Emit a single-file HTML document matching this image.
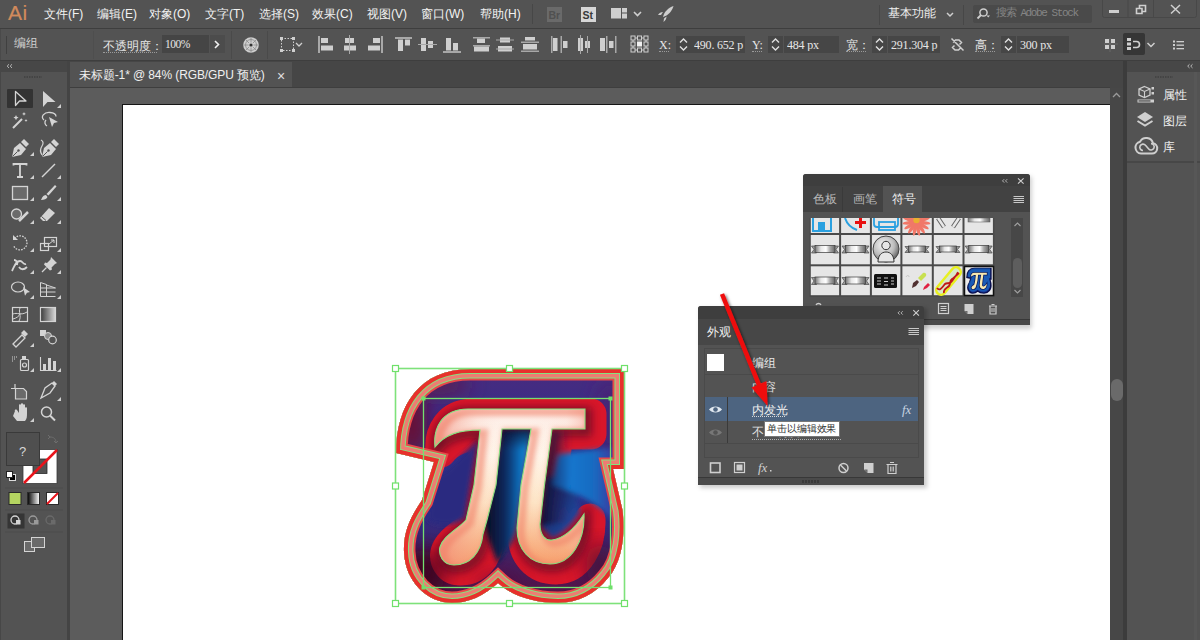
<!DOCTYPE html><html><head><meta charset="utf-8"><style>
*{margin:0;padding:0;box-sizing:border-box}
html,body{width:1200px;height:640px;overflow:hidden;background:#535353;font-family:"Liberation Sans",sans-serif;color:#e8e8e8}
.a{position:absolute}
.t{white-space:nowrap;line-height:1}
.m{position:absolute;top:7px;font-size:12px;color:#f2f2f2;white-space:nowrap;line-height:14px}
.sf{font-family:"Liberation Serif",serif}
</style></head><body>
<div class="a" style="left:0px;top:0px;width:1200px;height:28px;background:#535353"></div>
<div class="a t" style="left:8px;top:2px;font-size:21px;color:#d08a5c;line-height:22px;letter-spacing:0.5px;-webkit-text-stroke:0.2px #d08a5c">Ai</div>
<div class="m" style="left:44px">文件(F)</div>
<div class="m" style="left:97px">编辑(E)</div>
<div class="m" style="left:149px">对象(O)</div>
<div class="m" style="left:205px">文字(T)</div>
<div class="m" style="left:259px">选择(S)</div>
<div class="m" style="left:312px">效果(C)</div>
<div class="m" style="left:367px">视图(V)</div>
<div class="m" style="left:421px">窗口(W)</div>
<div class="m" style="left:480px">帮助(H)</div>
<div class="a" style="left:532px;top:4px;width:1px;height:20px;background:#474747"></div>
<div class="a" style="left:547px;top:7px;width:15px;height:15px;background:#6a6a6a"></div>
<div class="a t" style="left:548.5px;top:8.5px;font-size:10.5px;font-weight:bold;color:#505050;line-height:12px">Br</div>
<div class="a" style="left:581px;top:7px;width:15px;height:15px;background:#d6d6d6"></div>
<div class="a t" style="left:582.5px;top:8.5px;font-size:10.5px;font-weight:bold;color:#3a3a3a;line-height:12px">St</div>
<svg class="a" style="left:0;top:0" width="1200" height="28"><rect x="611" y="8" width="10" height="10.5" fill="#cfcfcf"/><rect x="622" y="8" width="5" height="4.5" fill="#cfcfcf"/><rect x="622" y="13.5" width="5" height="5" fill="#cfcfcf"/><path d="M634 12l3.5 3.5 3.5-3.5" stroke="#cfcfcf" stroke-width="1.6" fill="none"/><path d="M663 17 C664 12 668 8 673.5 6 C672 11.5 668 15.5 663 17Z" fill="#cfcfcf"/><path d="M658 15c1-2 3-3 5-3l-2 3z M664 18.5l2.5-2c0 2-1 4-3 5.5z" fill="#cfcfcf"/><path d="M1102.5 0v15.5a2 2 0 0 0 2 2h90a2 2 0 0 0 2-2V0" stroke="#484848" fill="none"/><rect x="1127.5" y="0" width="1" height="17" fill="#484848"/><rect x="1153" y="0" width="1" height="17" fill="#484848"/><rect x="1109" y="10" width="10" height="3" fill="#cfcfcf"/><path d="M1136.5 8.5h5.5v5h-5.5zM1139.5 8.5v-3h6v6h-3.5" stroke="#cfcfcf" stroke-width="1.6" fill="none"/><path d="M1171 5l9 8.5M1180 5l-9 8.5" stroke="#cfcfcf" stroke-width="1.5"/><rect x="973" y="5" width="119" height="18" rx="2" fill="#4a4a4a"/><circle cx="983.5" cy="12.5" r="3.6" stroke="#cfcfcf" stroke-width="1.5" fill="none"/><path d="M981 15l-3.5 3.5" stroke="#cfcfcf" stroke-width="1.8"/><path d="M986.5 15.5h3.5l-1.75 2z" fill="#cfcfcf"/><path d="M947 13l3 3 3-3" stroke="#cfcfcf" stroke-width="1.5" fill="none"/></svg>
<div class="a" style="left:879px;top:5px;width:1px;height:20px;background:#474747"></div>
<div class="a" style="left:963px;top:5px;width:1px;height:20px;background:#474747"></div>
<div class="a t" style="left:888px;top:7px;font-size:12px;color:#f0f0f0">基本功能</div>
<div class="a t" style="left:996px;top:8px;font-size:11px;color:#858585;font-family:'Liberation Mono',monospace;letter-spacing:-1.4px">搜索 Adobe Stock</div>
<div class="a" style="left:0px;top:28px;width:1200px;height:1px;background:#3e3e3e"></div>
<div class="a" style="left:0px;top:29px;width:1200px;height:32px;background:#535353"></div>
<div class="a" style="left:6px;top:36px;width:1px;height:18px;background:#404040"></div>
<div class="a" style="left:93px;top:31px;width:1px;height:28px;background:#4e4e4e"></div>
<div class="a" style="left:0px;top:29px;width:1px;height:32px;background:#4a4a4a"></div>
<div class="a t" style="left:14px;top:37px;font-size:12px;color:#d0d0d0;font-family:'Liberation Serif',serif">编组</div>
<div class="a t" style="left:103px;top:40px;font-size:12px;color:#e6e6e6;font-family:'Liberation Serif',serif">不透明度：</div>
<div class="a" style="left:103px;top:52px;width:54px;height:1px;border-top:1px dotted #9a9a9a"></div>
<div class="a" style="left:162px;top:35px;width:47px;height:18px;background:#454545"></div>
<div class="a t" style="left:165px;top:39px;font-size:11.5px;color:#e6e6e6;font-family:'Liberation Serif',serif;letter-spacing:-0.5px">100%</div>
<div class="a" style="left:210px;top:35px;width:15px;height:18px;background:#4c4c4c"></div>
<div class="a" style="left:231px;top:31px;width:1px;height:28px;background:#4a4a4a"></div>
<div class="a" style="left:267px;top:31px;width:1px;height:28px;background:#4a4a4a"></div>
<svg class="a" style="left:0;top:0" width="1200" height="64"><path d="M215 41l3.5 3.5-3.5 3.5" stroke="#f0f0f0" stroke-width="1.6" fill="none"/><circle cx="251" cy="45" r="7.8" fill="#cfcfcf"/><circle cx="251" cy="45" r="5.5" fill="none" stroke="#8a8a8a" stroke-width="0.8"/><circle cx="251" cy="45" r="1.6" fill="#333"/><path d="M251 37.5v5M251 47.5v5M243.5 45h5M253.5 45h5M245.7 39.7l3.5 3.5M252.8 46.8l3.5 3.5M256.3 39.7l-3.5 3.5M249.2 46.8l-3.5 3.5" stroke="#8a8a8a" stroke-width="0.8"/><rect x="281.5" y="38.5" width="12" height="12" fill="none" stroke="#cfcfcf" stroke-width="1" stroke-dasharray="1.5 1.5"/><rect x="280.0" y="37.0" width="3" height="3" fill="#cfcfcf"/><rect x="292.0" y="37.0" width="3" height="3" fill="#cfcfcf"/><rect x="280.0" y="49.0" width="3" height="3" fill="#cfcfcf"/><rect x="292.0" y="49.0" width="3" height="3" fill="#cfcfcf"/><path d="M296 43l3 3 3-3" stroke="#cfcfcf" stroke-width="1.3" fill="none"/><rect x="318" y="36" width="2" height="17" fill="#a8a8a8"/><rect x="321" y="38" width="7" height="5" fill="#cfcfcf"/><rect x="321" y="45.5" width="12" height="5" fill="#cfcfcf"/><rect x="345" y="38" width="9" height="5" fill="#cfcfcf"/><rect x="344" y="45.5" width="12" height="5" fill="#cfcfcf"/><rect x="349" y="35" width="1" height="19" fill="#a8a8a8"/><rect x="381" y="36" width="2" height="17" fill="#a8a8a8"/><rect x="373" y="38" width="7" height="5" fill="#cfcfcf"/><rect x="368" y="45.5" width="12" height="5" fill="#cfcfcf"/><rect x="395" y="37" width="17" height="2" fill="#a8a8a8"/><rect x="398" y="39.5" width="5" height="11.5" fill="#cfcfcf"/><rect x="405" y="39.5" width="5" height="6" fill="#cfcfcf"/><rect x="421" y="38" width="5" height="13" fill="#cfcfcf"/><rect x="428" y="41" width="5" height="7" fill="#cfcfcf"/><rect x="418" y="44" width="19" height="1" fill="#a8a8a8"/><rect x="443" y="51" width="18" height="2" fill="#a8a8a8"/><rect x="446" y="38" width="5" height="12.5" fill="#cfcfcf"/><rect x="453" y="43" width="5" height="7.5" fill="#cfcfcf"/><rect x="473" y="37" width="17" height="1.5" fill="#a8a8a8"/><rect x="477" y="38.5" width="8" height="4.5" fill="#cfcfcf"/><rect x="473" y="45" width="17" height="1.5" fill="#a8a8a8"/><rect x="474" y="46.5" width="15" height="5" fill="#cfcfcf"/><rect x="500" y="37.5" width="10" height="5" fill="#cfcfcf"/><rect x="496" y="39.5" width="18" height="1" fill="#a8a8a8"/><rect x="498" y="46" width="14" height="5.5" fill="#cfcfcf"/><rect x="496" y="48.5" width="18" height="1" fill="#a8a8a8"/><rect x="525" y="37" width="10" height="3.5" fill="#cfcfcf"/><rect x="521" y="41.5" width="18" height="1.5" fill="#a8a8a8"/><rect x="523" y="44" width="14" height="5.5" fill="#cfcfcf"/><rect x="521" y="50.5" width="18" height="1.5" fill="#a8a8a8"/><rect x="551" y="36" width="1.5" height="17" fill="#a8a8a8"/><rect x="553" y="38" width="4.5" height="13" fill="#cfcfcf"/><rect x="560.5" y="36" width="1.5" height="17" fill="#a8a8a8"/><rect x="563" y="41" width="4.5" height="7" fill="#cfcfcf"/><rect x="578" y="38" width="5" height="13" fill="#cfcfcf"/><rect x="580" y="35" width="1" height="19" fill="#a8a8a8"/><rect x="585" y="41" width="5" height="7" fill="#cfcfcf"/><rect x="587" y="36" width="1" height="17" fill="#a8a8a8"/><rect x="600" y="38" width="5" height="13" fill="#cfcfcf"/><rect x="606" y="36" width="1.5" height="17" fill="#a8a8a8"/><rect x="609" y="41" width="4.5" height="7" fill="#cfcfcf"/><rect x="615" y="36" width="1.5" height="17" fill="#a8a8a8"/><rect x="631" y="36" width="4" height="4" fill="none" stroke="#cfcfcf" stroke-width="1"/><rect x="631" y="42" width="4" height="4" fill="none" stroke="#cfcfcf" stroke-width="1"/><rect x="631" y="48" width="4" height="4" fill="none" stroke="#cfcfcf" stroke-width="1"/><rect x="637.5" y="36" width="4" height="4" fill="none" stroke="#cfcfcf" stroke-width="1"/><rect x="637.0" y="41.5" width="5" height="5" fill="#f0f0f0"/><rect x="637.5" y="48" width="4" height="4" fill="none" stroke="#cfcfcf" stroke-width="1"/><rect x="644" y="36" width="4" height="4" fill="none" stroke="#cfcfcf" stroke-width="1"/><rect x="644" y="42" width="4" height="4" fill="none" stroke="#cfcfcf" stroke-width="1"/><rect x="644" y="48" width="4" height="4" fill="none" stroke="#cfcfcf" stroke-width="1"/><path d="M635 38h2.5M642 38h2M635 50h2.5M642 50h2M633 40v2M633 46v2M646 40v2M646 46v2" stroke="#cfcfcf" stroke-width="1"/></svg>
<div class="a t" style="left:659px;top:39px;font-size:12px;color:#e6e6e6;font-family:'Liberation Serif',serif">X:</div>
<div class="a" style="left:659px;top:51px;width:10px;height:1px;border-top:1px dotted #9a9a9a"></div>
<div class="a" style="left:676px;top:36px;width:15px;height:17px;background:#464646"></div>
<div class="a" style="left:691px;top:36px;width:54px;height:17px;background:#464646"></div>
<div class="a t" style="left:694px;top:39px;font-size:12px;color:#e6e6e6;font-family:'Liberation Serif',serif;letter-spacing:-0.2px;width:50px;overflow:hidden">490. 652 p</div>
<div class="a t" style="left:752px;top:39px;font-size:12px;color:#e6e6e6;font-family:'Liberation Serif',serif">Y:</div>
<div class="a" style="left:752px;top:51px;width:10px;height:1px;border-top:1px dotted #9a9a9a"></div>
<div class="a" style="left:768px;top:36px;width:15px;height:17px;background:#464646"></div>
<div class="a" style="left:784px;top:36px;width:55px;height:17px;background:#464646"></div>
<div class="a t" style="left:787px;top:39px;font-size:12px;color:#e6e6e6;font-family:'Liberation Serif',serif;letter-spacing:-0.2px;width:51px;overflow:hidden">484 px</div>
<div class="a t" style="left:846px;top:39px;font-size:12px;color:#e6e6e6;font-family:'Liberation Serif',serif">宽：</div>
<div class="a" style="left:846px;top:51px;width:20px;height:1px;border-top:1px dotted #9a9a9a"></div>
<div class="a" style="left:872px;top:36px;width:15px;height:17px;background:#464646"></div>
<div class="a" style="left:888px;top:36px;width:52px;height:17px;background:#464646"></div>
<div class="a t" style="left:891px;top:39px;font-size:12px;color:#e6e6e6;font-family:'Liberation Serif',serif;letter-spacing:-0.2px;width:48px;overflow:hidden">291.304 p</div>
<div class="a t" style="left:975px;top:39px;font-size:12px;color:#e6e6e6;font-family:'Liberation Serif',serif">高：</div>
<div class="a" style="left:975px;top:51px;width:20px;height:1px;border-top:1px dotted #9a9a9a"></div>
<div class="a" style="left:1001px;top:36px;width:15px;height:17px;background:#464646"></div>
<div class="a" style="left:1017px;top:36px;width:52px;height:17px;background:#464646"></div>
<div class="a t" style="left:1020px;top:39px;font-size:12px;color:#e6e6e6;font-family:'Liberation Serif',serif;letter-spacing:-0.2px;width:48px;overflow:hidden">300 px</div>
<div class="a" style="left:1123px;top:33px;width:22px;height:22px;background:#363636;border-radius:2px"></div>
<svg class="a" style="left:0;top:0" width="1200" height="64"><path d="M680 42.5l3.5-3.5 3.5 3.5M680 46.5l3.5 3.5 3.5-3.5" stroke="#e0e0e0" stroke-width="1.4" fill="none"/><path d="M772 42.5l3.5-3.5 3.5 3.5M772 46.5l3.5 3.5 3.5-3.5" stroke="#e0e0e0" stroke-width="1.4" fill="none"/><path d="M876 42.5l3.5-3.5 3.5 3.5M876 46.5l3.5 3.5 3.5-3.5" stroke="#e0e0e0" stroke-width="1.4" fill="none"/><path d="M1005 42.5l3.5-3.5 3.5 3.5M1005 46.5l3.5 3.5 3.5-3.5" stroke="#e0e0e0" stroke-width="1.4" fill="none"/><path d="M953 42.5l2.5-2.5h3.5l2.5 2.5-2 2M961 47.5l-2.5 2.5h-3.5l-2.5-2.5 2-2M951.5 38.5l12 12" stroke="#cfcfcf" stroke-width="1.5" fill="none"/><rect x="1105" y="39" width="4" height="4" fill="#cfcfcf"/><rect x="1111" y="39" width="4" height="4" fill="#cfcfcf"/><rect x="1105" y="45" width="4" height="4" fill="#cfcfcf"/><rect x="1111" y="45" width="4" height="4" fill="#cfcfcf"/><path d="M1104 44h14M1110 38v14" stroke="#777" stroke-width="0.6"/><rect x="1127" y="38" width="4" height="3" fill="#cfcfcf"/><rect x="1127" y="42.5" width="4" height="3" fill="#cfcfcf"/><rect x="1127" y="47" width="4" height="3" fill="#cfcfcf"/><path d="M1133 41.5h3.5a3 3 0 0 1 0 6h-3.5" stroke="#cfcfcf" stroke-width="1.6" fill="none"/><path d="M1147.5 43l3.5 3.5 3.5-3.5" stroke="#cfcfcf" stroke-width="1.5" fill="none"/><rect x="1173" y="40.5" width="2" height="2" fill="#cfcfcf"/><rect x="1173" y="44" width="2" height="2" fill="#cfcfcf"/><rect x="1173" y="47.5" width="2" height="2" fill="#cfcfcf"/><rect x="1176.5" y="41" width="7.5" height="1.3" fill="#cfcfcf"/><rect x="1176.5" y="44.5" width="7.5" height="1.3" fill="#cfcfcf"/><rect x="1176.5" y="48" width="7.5" height="1.3" fill="#cfcfcf"/></svg>
<div class="a" style="left:0px;top:60px;width:1200px;height:1px;background:#3e3e3e"></div>
<div class="a" style="left:68px;top:61px;width:1059px;height:27px;background:#464646"></div>
<div class="a" style="left:70px;top:62px;width:222px;height:26px;background:#535353"></div>
<div class="a t" style="left:79px;top:69px;font-size:12px;color:#f0f0f0;letter-spacing:-0.1px">未标题-1* @ 84% (RGB/GPU 预览)</div>
<div class="a t" style="left:277px;top:69px;font-size:14px;color:#e0e0e0">×</div>
<div class="a" style="left:70px;top:88px;width:1040px;height:552px;background:#5c5c5c"></div>
<div class="a" style="left:70px;top:87px;width:1040px;height:1px;background:#3e3e3e"></div>
<div class="a" style="left:122px;top:104px;width:988px;height:540px;background:#fff;border:1.5px solid #151515;border-right:none"></div>
<div class="a" style="left:1110px;top:88px;width:13px;height:552px;background:#474747"></div>
<div class="a" style="left:1111px;top:379px;width:12px;height:22px;background:#6a6a6a;border-radius:6px"></div>
<svg class="a" style="left:1110px;top:88px" width="13" height="14"><path d="M3 9l3.5-3.5 3.5 3.5" stroke="#9a9a9a" stroke-width="1.3" fill="none"/></svg>
<div class="a" style="left:1123px;top:61px;width:4px;height:579px;background:#3c3c3c"></div>
<div class="a" style="left:67px;top:61px;width:3px;height:579px;background:#444444"></div>
<div class="a" style="left:0px;top:61px;width:67px;height:11px;background:#474747"></div>
<div class="a" style="left:0px;top:72px;width:67px;height:568px;background:#535353;border-left:1px solid #474747"></div>
<svg class="a" style="left:0;top:0" width="68" height="640"><path d="M9 64.3l-1.8 1.8 1.8 1.8M12 64.3l-1.8 1.8 1.8 1.8" stroke="#c8c8c8" stroke-width="0.9" fill="none"/><path d="M24 77h18" stroke="#444" stroke-width="2" stroke-dasharray="1.5 1"/><rect x="7" y="89" width="26" height="19" rx="1" fill="#333333"/><path d="M15.5 91.5v14l4-4.5h6.5z" stroke="#d4d4d4" stroke-width="1.3" fill="none" stroke-linejoin="round"/><path d="M43 91v16l4.5-5h8z" fill="#d4d4d4"/><path d="M57 108h4v-4z" fill="#cfcfcf"/><path d="M13 128l9-9" stroke="#d4d4d4" stroke-width="2"/><path d="M16 115l.8 1.8 1.8.8-1.8.8-.8 1.8-.8-1.8-1.8-.8 1.8-.8z M24 112l.6 1.3 1.3.6-1.3.6-.6 1.3-.6-1.3-1.3-.6 1.3-.6z M26 119l.5 1 1 .5-1 .5-.5 1-.5-1-1-.5 1-.5z" fill="#d4d4d4"/><path d="M44 120c-4-3 0-8 6-7.5 4 .3 6 2 6 4M46 120c-2 2-1 5 1 6" stroke="#d4d4d4" stroke-width="1.3" fill="none"/><path d="M49 117l9 5-4 1-2 4z" fill="#d4d4d4"/><path d="M12 157l2-9 6-5 6 6-5 6z" fill="#d4d4d4"/><path d="M21 142l3-3 5 5-3 3z" fill="#d4d4d4"/><path d="M12.5 156.5l5-5" stroke="#535353" stroke-width="1"/><circle cx="18.5" cy="150.5" r="1.2" fill="#535353"/><path d="M30 156h4v-4z" fill="#cfcfcf"/><path d="M42 157l2-9 6-5 6 6-5 6z" fill="#d4d4d4"/><path d="M51 142l3-3 5 5-3 3z" fill="#d4d4d4"/><path d="M42.5 156.5l5-5" stroke="#535353" stroke-width="1"/><circle cx="48.5" cy="150.5" r="1.2" fill="#535353"/><path d="M42 155c-2-3-2-6 0-9s1-5-1-6" stroke="#d4d4d4" stroke-width="1.2" fill="none"/><path d="M13.5 165.5v-1.5h13v1.5M20 164v13M17 177h6" stroke="#d4d4d4" stroke-width="1.8" fill="none"/><path d="M30 179h4v-4z" fill="#cfcfcf"/><path d="M42 177l13-13" stroke="#d4d4d4" stroke-width="1.4"/><path d="M57 179h4v-4z" fill="#cfcfcf"/><rect x="12.5" y="186.5" width="15" height="13" fill="#6a6a6a" stroke="#d4d4d4" stroke-width="1.3"/><path d="M30 201h4v-4z" fill="#cfcfcf"/><path d="M55 185l1.5 1.5-8 9-2-1.5z" fill="#d4d4d4"/><path d="M46 195c-3 0-4 3-5 5 3 0 6-1 6.5-3z" fill="#d4d4d4"/><path d="M57 201h4v-4z" fill="#cfcfcf"/><circle cx="16.5" cy="214" r="5" fill="#6a6a6a" stroke="#d4d4d4" stroke-width="1.3"/><path d="M19 221l9-9" stroke="#d4d4d4" stroke-width="2.5"/><path d="M30 224h4v-4z" fill="#cfcfcf"/><path d="M49 208l6 5-8 8h-4l-3-3z" fill="#d4d4d4"/><path d="M41.5 216.5l4.5 4" stroke="#535353" stroke-width="1"/><path d="M57 224h4v-4z" fill="#cfcfcf"/><g transform="translate(0,2)"><path d="M14.5 236.5a7 7 0 1 1 -1 7" stroke="#d4d4d4" stroke-width="1.3" fill="none" stroke-dasharray="1.6 1.2"/><path d="M13 233v5h5z" fill="#d4d4d4"/><path d="M30 250h4v-4z" fill="#cfcfcf"/></g><g transform="translate(0,2)"><rect x="40.5" y="241.5" width="8" height="7" fill="none" stroke="#d4d4d4" stroke-width="1.2"/><rect x="44.5" y="235.5" width="12" height="9" fill="none" stroke="#d4d4d4" stroke-width="1.2"/><path d="M49 242l5-4M51 238h3v3" stroke="#d4d4d4" stroke-width="1" fill="none"/><path d="M57 250h4v-4z" fill="#cfcfcf"/></g><g transform="translate(0,1)"><path d="M12 270c3-6 4-10 8-10 3 0 3 4 6 3M14 259c2 0 4 2 3 5M19 266c2 3 5 3 8 0" stroke="#d4d4d4" stroke-width="1.8" fill="none"/><path d="M30 273h4v-4z" fill="#cfcfcf"/></g><g transform="translate(0,1)"><path d="M51 256l6 6-2 1-3.5 3.5.5 2-2 1-6-6 1-2 2 .5 3.5-3.5z" fill="#d4d4d4"/><path d="M42 271l4.5-4.5" stroke="#d4d4d4" stroke-width="1.3"/><path d="M57 273h4v-4z" fill="#cfcfcf"/></g><g transform="translate(0,2)"><ellipse cx="18" cy="285" rx="6.5" ry="5" fill="none" stroke="#d4d4d4" stroke-width="1.2"/><path d="M23 285l7 5-3 .8-2 3z" fill="#d4d4d4"/><path d="M30 297h4v-4z" fill="#cfcfcf"/></g><g transform="translate(0,2)"><path d="M40.5 280.5v14h15M40.5 280.5l6 2v12M40.5 286h15M40.5 290h15M46.5 283l9 3" stroke="#d4d4d4" stroke-width="1" fill="none"/><path d="M57 297h4v-4z" fill="#cfcfcf"/></g><g transform="translate(0,3)"><rect x="12.5" y="304.5" width="15" height="14" fill="none" stroke="#d4d4d4" stroke-width="1.2"/><path d="M13 311c4-2 8 2 14-2M20 305c-2 4 2 8-1 13M13 316c4-1 6-3 7-5" stroke="#d4d4d4" stroke-width="1" fill="none"/></g><g transform="translate(0,3)"><defs><linearGradient id="gt" x1="0" x2="1"><stop offset="0" stop-color="#3a3a3a"/><stop offset="1" stop-color="#d8d8d8"/></linearGradient><linearGradient id="gw" x1="0" x2="1"><stop offset="0" stop-color="#000"/><stop offset="1" stop-color="#fff"/></linearGradient></defs></g><g transform="translate(0,3)"><rect x="40.5" y="304.5" width="15" height="14" fill="url(#gt)" stroke="#d4d4d4" stroke-width="1.2"/></g><path d="M13 344l9-9 3 3-9 9z" fill="none" stroke="#d4d4d4" stroke-width="1.3"/><path d="M21 333l3-3 4 4-3 3z" fill="#d4d4d4"/><path d="M30 347h4v-4z" fill="#cfcfcf"/><rect x="40" y="330" width="6" height="6" fill="#d4d4d4"/><circle cx="48" cy="336" r="3.5" fill="#8a8a8a" stroke="#d4d4d4" stroke-width="1"/><circle cx="52.5" cy="340" r="3.8" fill="#535353" stroke="#d4d4d4" stroke-width="1.2"/><path d="M12 357h1M14 357h1M16 357h1M12 359h1M14 359h1M12 361h1" stroke="#d4d4d4" stroke-width="1.2"/><rect x="20.5" y="359.5" width="8" height="11" rx="1" fill="none" stroke="#d4d4d4" stroke-width="1.2"/><rect x="22" y="356" width="4" height="3" fill="#d4d4d4"/><circle cx="24.5" cy="365" r="2" fill="none" stroke="#d4d4d4" stroke-width="1.2"/><path d="M30 372h4v-4z" fill="#cfcfcf"/><path d="M40.5 357v13.5h16" stroke="#d4d4d4" stroke-width="1.1" fill="none"/><rect x="43" y="364" width="3" height="6" fill="#d4d4d4"/><rect x="48" y="358" width="3" height="12" fill="#d4d4d4"/><rect x="53" y="361" width="3" height="9" fill="#d4d4d4"/><path d="M57 372h4v-4z" fill="#cfcfcf"/><path d="M15 384v5M11 388.5h5" stroke="#d4d4d4" stroke-width="1.2"/><path d="M15.5 388.5h8l3 3v7.5h-11z" fill="#6a6a6a" stroke="#d4d4d4" stroke-width="1.2"/><path d="M41 398l4-10 7-5 3 3-5 7z" fill="none" stroke="#d4d4d4" stroke-width="1.3"/><path d="M52 383l2-2 3 3-2 2z" fill="#d4d4d4"/><path d="M57 401h4v-4z" fill="#cfcfcf"/><path d="M13 416l4 5h8c2-2 2-5 2-8v-5c0-1-2-1-2 0v4v-7c0-1-2-1-2 0v6v-7c0-1-2-1-2 0v7v-6c0-1-2-1-2 0v8l-2-3c-1-1-3 0-2 1z" fill="#d4d4d4"/><path d="M30 422h4v-4z" fill="#cfcfcf"/><circle cx="46.5" cy="412" r="5" fill="none" stroke="#d4d4d4" stroke-width="1.5"/><path d="M50 415.5l5 5" stroke="#d4d4d4" stroke-width="2"/><path d="M5 488h58" stroke="#4c4c4c" stroke-width="1"/><path d="M5 510h58" stroke="#4c4c4c" stroke-width="1"/><path d="M5 532h58" stroke="#4c4c4c" stroke-width="1"/><rect x="23" y="449.5" width="34" height="34" fill="#fff" stroke="#3a3a3a" stroke-width="0.8"/><rect x="33" y="459" width="14" height="14.5" fill="#535353" stroke="#2a2a2a" stroke-width="0.8"/><path d="M24 483l33-33" stroke="#e8141b" stroke-width="2.5"/><rect x="6.5" y="432.5" width="33" height="33" fill="#4f4f4f" stroke="#3a3a3a" stroke-width="1"/><text x="22.5" y="456" font-size="13" fill="#d8d8d8" text-anchor="middle" font-family="Liberation Sans">?</text><path d="M50 437c4 0 6 2 6 6M48 439l2-2-2-2M54 441l2 2 2-2" stroke="#6e6e6e" stroke-width="1" fill="none"/><rect x="9.5" y="474.5" width="6" height="6" fill="#000" stroke="#ddd" stroke-width="1"/><rect x="6.5" y="471.5" width="6" height="6" fill="#fff" stroke="#222" stroke-width="1"/><rect x="9" y="492.5" width="12" height="12" fill="#b5d561" stroke="#2a2a2a" stroke-width="1"/><rect x="27.5" y="492.5" width="12" height="12" fill="url(#gw)" stroke="#2a2a2a" stroke-width="1"/><rect x="46.5" y="492.5" width="12" height="12" fill="#fff" stroke="#2a2a2a" stroke-width="1"/><path d="M47 504l11-11" stroke="#e8141b" stroke-width="2"/><rect x="7.5" y="513.5" width="17" height="15" fill="#353535"/><circle cx="15" cy="520" r="4" fill="none" stroke="#d4d4d4" stroke-width="1.3"/><rect x="16" y="520" width="4.5" height="4.5" fill="#d4d4d4"/><circle cx="33" cy="520" r="4" fill="none" stroke="#9a9a9a" stroke-width="1.3"/><rect x="34" y="520" width="4.5" height="4.5" fill="#9a9a9a"/><circle cx="50" cy="520" r="4" fill="none" stroke="#6a6a6a" stroke-width="1.3"/><rect x="51" y="520" width="4.5" height="4.5" fill="#6a6a6a"/><rect x="24.5" y="541.5" width="10" height="10" fill="#6a6a6a" stroke="#d4d4d4" stroke-width="1"/><rect x="31.5" y="537.5" width="13" height="10" fill="#6a6a6a" stroke="#d4d4d4" stroke-width="1"/></svg>
<svg class="a" style="left:380px;top:355px" width="260" height="260" viewBox="380 355 260 260"><defs><clipPath id="cp"><path d="M396,453 C396,405 420,369 470,369 L624,369 L624,469 L613,469 L622.5,510 C625,530 624,560 608,578 C595,594 578,603 558,603 C535,603 512,596 498,583 C484,596 468,603 452,603 C428,603 405,582 404,552 C403,530 412,515 422,500 L434,462 Z"/></clipPath><linearGradient id="ibg" x1="0" y1="0" x2="0" y2="1"><stop offset="0" stop-color="#4a2a7e"/><stop offset="0.25" stop-color="#33308a"/><stop offset="0.6" stop-color="#2c2f88"/><stop offset="1" stop-color="#5a1040"/></linearGradient><radialGradient id="blue1" cx="0.5" cy="0.5" r="0.5"><stop offset="0" stop-color="#0a9ae0"/><stop offset="0.6" stop-color="#0a70c8"/><stop offset="1" stop-color="#0a70c8" stop-opacity="0"/></radialGradient><radialGradient id="mar" cx="0.5" cy="0.5" r="0.5"><stop offset="0" stop-color="#6a0828"/><stop offset="1" stop-color="#6a0828" stop-opacity="0"/></radialGradient><linearGradient id="pig" gradientUnits="userSpaceOnUse" x1="0" y1="409" x2="0" y2="565"><stop offset="0" stop-color="#fdeee8"/><stop offset="0.3" stop-color="#fff6ea"/><stop offset="0.6" stop-color="#fde4c4"/><stop offset="1" stop-color="#f69a64"/></linearGradient><linearGradient id="pigh" gradientUnits="userSpaceOnUse" x1="430" y1="0" x2="590" y2="0"><stop offset="0" stop-color="#f08070" stop-opacity="0.8"/><stop offset="0.3" stop-color="#f6b0a0" stop-opacity="0.15"/><stop offset="0.5" stop-color="#fff" stop-opacity="0"/><stop offset="0.85" stop-color="#f8b8a8" stop-opacity="0.1"/><stop offset="1" stop-color="#f49888" stop-opacity="0.6"/></linearGradient><linearGradient id="pig2" gradientUnits="userSpaceOnUse" x1="0" y1="409" x2="0" y2="440"><stop offset="0" stop-color="#fff" stop-opacity="1"/><stop offset="1" stop-color="#fff" stop-opacity="0"/></linearGradient><filter id="bl6" x="-20%" y="-20%" width="140%" height="140%"><feGaussianBlur stdDeviation="6"/></filter><filter id="bl3" x="-20%" y="-20%" width="140%" height="140%"><feGaussianBlur stdDeviation="2.5"/></filter><filter id="bl10" x="-30%" y="-30%" width="160%" height="160%"><feGaussianBlur stdDeviation="10"/></filter><filter id="bl2" x="-20%" y="-20%" width="140%" height="140%"><feGaussianBlur stdDeviation="2"/></filter><linearGradient id="gap3" x1="0" y1="0" x2="1" y2="1"><stop offset="0" stop-color="#0a1a4a"/><stop offset="1" stop-color="#2a50b0"/></linearGradient><filter id="bl1" x="-20%" y="-20%" width="140%" height="140%"><feGaussianBlur stdDeviation="0.7"/></filter><filter id="bl4" x="-20%" y="-20%" width="140%" height="140%"><feGaussianBlur stdDeviation="4"/></filter><linearGradient id="gap1" x1="0" y1="0" x2="1" y2="0"><stop offset="0" stop-color="#050a20"/><stop offset="0.45" stop-color="#0a2a60"/><stop offset="0.8" stop-color="#0a78c8"/><stop offset="1" stop-color="#0a90d8"/></linearGradient><linearGradient id="nav" x1="0" y1="0" x2="1" y2="0"><stop offset="0" stop-color="#081030"/><stop offset="1" stop-color="#3a1a5a" stop-opacity="0"/></linearGradient><linearGradient id="topsh" x1="0" y1="0" x2="0" y2="1"><stop offset="0" stop-color="#081030" stop-opacity="0.9"/><stop offset="1" stop-color="#081030" stop-opacity="0"/></linearGradient><linearGradient id="gap2" x1="0" y1="0" x2="1" y2="0"><stop offset="0" stop-color="#0a80d8"/><stop offset="0.7" stop-color="#1a6ac0"/><stop offset="1" stop-color="#3a3aa0"/></linearGradient></defs><g clip-path="url(#cp)"><path d="M396,453 C396,405 420,369 470,369 L624,369 L624,469 L613,469 L622.5,510 C625,530 624,560 608,578 C595,594 578,603 558,603 C535,603 512,596 498,583 C484,596 468,603 452,603 C428,603 405,582 404,552 C403,530 412,515 422,500 L434,462 Z" fill="url(#ibg)"/><g filter="url(#bl10)"><ellipse cx="412" cy="425" rx="16" ry="32" fill="#6a0a30"/><ellipse cx="420" cy="575" rx="25" ry="25" fill="#4a0828"/><ellipse cx="610" cy="420" rx="12" ry="40" fill="#4a2070"/><ellipse cx="440" cy="385" rx="30" ry="10" fill="#5a1a50"/></g><g filter="url(#bl1)"><path d="M435,447 C433,428 442,409 468,409 L585,409 L585,429 L552,429 L544.5,485 L540,524 C540,536 546,541 552,540 C562,539 574,530 584,514 C585,540 572,564 550,564 C530,564 517,550 517,528 L521,485 L531,429 L502,429 L496,485 L487,520 L483,534 C481,553 470,565 454,565 C443,565 438,555 440,547 C443,536 458,529 466,520 L474,485 L480,430 C460,430 445,434 435,447 Z" transform="translate(6,5)" fill="#d8142a" stroke="#d8142a" stroke-width="31" stroke-linejoin="round"/></g><g filter="url(#bl4)" opacity="0.7"><path d="M435,447 C433,428 442,409 468,409 L585,409 L585,429 L552,429 L544.5,485 L540,524 C540,536 546,541 552,540 C562,539 574,530 584,514 C585,540 572,564 550,564 C530,564 517,550 517,528 L521,485 L531,429 L502,429 L496,485 L487,520 L483,534 C481,553 470,565 454,565 C443,565 438,555 440,547 C443,536 458,529 466,520 L474,485 L480,430 C460,430 445,434 435,447 Z" transform="translate(2,3)" fill="none" stroke="#4a0828" stroke-width="9"/></g><g filter="url(#bl10)" opacity="0.75"><ellipse cx="425" cy="572" rx="22" ry="18" fill="#3a0620"/><ellipse cx="600" cy="565" rx="14" ry="22" fill="#4a0a30"/><ellipse cx="498" cy="585" rx="20" ry="8" fill="#4a0a30"/></g><g filter="url(#bl3)"><path d="M502,430 L531,430 L517,524 C515,542 505,552 498,564 C492,550 487,537 485,524 Z" fill="url(#gap1)"/><path d="M545,478 L572,475 L580,512 C572,525 562,535 552,538 L542,528 Z" fill="url(#gap3)"/><path d="M558,455 C570,452 590,450 613,448 L613,520 L600,508 C590,500 580,496 572,492 L552,485 Z" fill="url(#gap2)"/><path d="M447,470 L478,440 L465,518 C455,525 440,528 428,520 L432,478 Z" fill="#2a2a80"/><path d="M551,430 L572,430 L566,522 L540,526 Z" fill="url(#nav)"/><path d="M500,428 L533,428 L531,450 L498,450 Z" fill="url(#topsh)"/></g><path d="M396,453 C396,405 420,369 470,369 L624,369 L624,469 L613,469 L622.5,510 C625,530 624,560 608,578 C595,594 578,603 558,603 C535,603 512,596 498,583 C484,596 468,603 452,603 C428,603 405,582 404,552 C403,530 412,515 422,500 L434,462 Z" fill="none" stroke="#e8484a" stroke-width="23"/><path d="M396,453 C396,405 420,369 470,369 L624,369 L624,469 L613,469 L622.5,510 C625,530 624,560 608,578 C595,594 578,603 558,603 C535,603 512,596 498,583 C484,596 468,603 452,603 C428,603 405,582 404,552 C403,530 412,515 422,500 L434,462 Z" fill="none" stroke="#86e27e" stroke-width="19"/><path d="M396,453 C396,405 420,369 470,369 L624,369 L624,469 L613,469 L622.5,510 C625,530 624,560 608,578 C595,594 578,603 558,603 C535,603 512,596 498,583 C484,596 468,603 452,603 C428,603 405,582 404,552 C403,530 412,515 422,500 L434,462 Z" fill="none" stroke="#ee7c72" stroke-width="17"/><path d="M396,453 C396,405 420,369 470,369 L624,369 L624,469 L613,469 L622.5,510 C625,530 624,560 608,578 C595,594 578,603 558,603 C535,603 512,596 498,583 C484,596 468,603 452,603 C428,603 405,582 404,552 C403,530 412,515 422,500 L434,462 Z" fill="none" stroke="#86e27e" stroke-width="10"/><path d="M396,453 C396,405 420,369 470,369 L624,369 L624,469 L613,469 L622.5,510 C625,530 624,560 608,578 C595,594 578,603 558,603 C535,603 512,596 498,583 C484,596 468,603 452,603 C428,603 405,582 404,552 C403,530 412,515 422,500 L434,462 Z" fill="none" stroke="#e8302c" stroke-width="8"/></g><path d="M435,447 C433,428 442,409 468,409 L585,409 L585,429 L552,429 L544.5,485 L540,524 C540,536 546,541 552,540 C562,539 574,530 584,514 C585,540 572,564 550,564 C530,564 517,550 517,528 L521,485 L531,429 L502,429 L496,485 L487,520 L483,534 C481,553 470,565 454,565 C443,565 438,555 440,547 C443,536 458,529 466,520 L474,485 L480,430 C460,430 445,434 435,447 Z" fill="url(#pig)"/><path d="M435,447 C433,428 442,409 468,409 L585,409 L585,429 L552,429 L544.5,485 L540,524 C540,536 546,541 552,540 C562,539 574,530 584,514 C585,540 572,564 550,564 C530,564 517,550 517,528 L521,485 L531,429 L502,429 L496,485 L487,520 L483,534 C481,553 470,565 454,565 C443,565 438,555 440,547 C443,536 458,529 466,520 L474,485 L480,430 C460,430 445,434 435,447 Z" fill="url(#pigh)"/><clipPath id="cpi"><path d="M435,447 C433,428 442,409 468,409 L585,409 L585,429 L552,429 L544.5,485 L540,524 C540,536 546,541 552,540 C562,539 574,530 584,514 C585,540 572,564 550,564 C530,564 517,550 517,528 L521,485 L531,429 L502,429 L496,485 L487,520 L483,534 C481,553 470,565 454,565 C443,565 438,555 440,547 C443,536 458,529 466,520 L474,485 L480,430 C460,430 445,434 435,447 Z"/></clipPath><g clip-path="url(#cpi)"><g filter="url(#bl3)"><path d="M435,447 C433,428 442,409 468,409 L585,409 L585,429 L552,429 L544.5,485 L540,524 C540,536 546,541 552,540 C562,539 574,530 584,514 C585,540 572,564 550,564 C530,564 517,550 517,528 L521,485 L531,429 L502,429 L496,485 L487,520 L483,534 C481,553 470,565 454,565 C443,565 438,555 440,547 C443,536 458,529 466,520 L474,485 L480,430 C460,430 445,434 435,447 Z" transform="translate(4,3)" fill="none" stroke="#f08068" stroke-width="8" opacity="0.6"/></g></g><path d="M435,447 C433,428 442,409 468,409 L585,409 L585,429 L552,429 L544.5,485 L540,524 C540,536 546,541 552,540 C562,539 574,530 584,514 C585,540 572,564 550,564 C530,564 517,550 517,528 L521,485 L531,429 L502,429 L496,485 L487,520 L483,534 C481,553 470,565 454,565 C443,565 438,555 440,547 C443,536 458,529 466,520 L474,485 L480,430 C460,430 445,434 435,447 Z" fill="none" stroke="#86e07e" stroke-width="1.1"/><rect x="423.5" y="398.5" width="187" height="189" fill="none" stroke="#74e070" stroke-width="1.3"/><rect x="421.5" y="396.5" width="4" height="4" fill="#6fe06a"/><rect x="608.5" y="396.5" width="4" height="4" fill="#6fe06a"/><rect x="421.5" y="585.5" width="4" height="4" fill="#6fe06a"/><rect x="608.5" y="585.5" width="4" height="4" fill="#6fe06a"/><rect x="395.5" y="368.5" width="229" height="235" fill="none" stroke="#7ee27a" stroke-width="1.6"/><rect x="392.5" y="365.5" width="6" height="6" fill="#fff" stroke="#6fe06a" stroke-width="1.2"/><rect x="506.5" y="365.5" width="6" height="6" fill="#fff" stroke="#6fe06a" stroke-width="1.2"/><rect x="621.5" y="365.5" width="6" height="6" fill="#fff" stroke="#6fe06a" stroke-width="1.2"/><rect x="392.5" y="483" width="6" height="6" fill="#fff" stroke="#6fe06a" stroke-width="1.2"/><rect x="621.5" y="483" width="6" height="6" fill="#fff" stroke="#6fe06a" stroke-width="1.2"/><rect x="392.5" y="600.5" width="6" height="6" fill="#fff" stroke="#6fe06a" stroke-width="1.2"/><rect x="506.5" y="600.5" width="6" height="6" fill="#fff" stroke="#6fe06a" stroke-width="1.2"/><rect x="621.5" y="600.5" width="6" height="6" fill="#fff" stroke="#6fe06a" stroke-width="1.2"/></svg>
<div class="a" style="left:1127px;top:61px;width:73px;height:11px;background:#474747"></div>
<div class="a" style="left:1127px;top:72px;width:73px;height:90px;background:#535353"></div>
<div class="a" style="left:1127px;top:161px;width:73px;height:2px;background:#474747"></div>
<div class="a" style="left:1127px;top:163px;width:73px;height:477px;background:#535353"></div>
<div class="a" style="left:1194px;top:72px;width:3px;height:568px;background:#575757"></div>
<svg class="a" style="left:0;top:0" width="1200" height="200"><path d="M1189.5 64.3l-1.8 1.8 1.8 1.8M1192.5 64.3l-1.8 1.8 1.8 1.8" stroke="#c8c8c8" stroke-width="0.9" fill="none"/><path d="M1155 77h18" stroke="#444" stroke-width="2" stroke-dasharray="1.5 1"/><path d="M1144.5 86.5l5.5 2.5v6l-5.5 2.5-5.5-2.5v-6z" fill="none" stroke="#cfcfcf" stroke-width="1.3"/><path d="M1139 89l5.5 2.5 5.5-2.5M1144.5 91.5v6" stroke="#cfcfcf" stroke-width="1.1" fill="none"/><rect x="1151.5" y="87" width="2.5" height="2.5" fill="#cfcfcf"/><rect x="1151.5" y="92" width="2.5" height="2.5" fill="#cfcfcf"/><rect x="1137.5" y="99.5" width="16.5" height="3" fill="#cfcfcf"/><rect x="1138.5" y="100.3" width="12" height="1.3" fill="#535353"/><path d="M1145 112l8 5-8 5-8-5z" fill="#cfcfcf"/><path d="M1137.5 121l7.5 4.5 7.5-4.5" stroke="#cfcfcf" stroke-width="2" fill="none"/><path d="M1141 153.5a6 6 0 0 1 -1-11.8a7 7 0 0 1 13 1.5a5.2 5.2 0 0 1 -1 10.3z" fill="none" stroke="#cfcfcf" stroke-width="2"/><path d="M1143 150.5a3.2 3.2 0 1 1 2.5-5.2l3 3.5a3.2 3.2 0 1 0 2.5-5.2" stroke="#cfcfcf" stroke-width="1.6" fill="none"/></svg>
<div class="a t" style="left:1163px;top:89px;font-size:12px;color:#f0f0f0">属性</div>
<div class="a t" style="left:1163px;top:115px;font-size:12px;color:#f0f0f0">图层</div>
<div class="a t" style="left:1163px;top:141px;font-size:12px;color:#f0f0f0">库</div>
<div class="a" style="left:805px;top:176px;width:227px;height:153px;background:rgba(0,0,0,0.18);border-radius:3px;filter:blur(2px)"></div>
<div class="a" style="left:803px;top:174px;width:227px;height:151px;background:#535353;border-radius:3px 3px 0 0;overflow:hidden"></div>
<div class="a" style="left:803px;top:174px;width:227px;height:12px;background:#3e3e3e;border-radius:3px 3px 0 0"></div>
<div class="a" style="left:803px;top:186px;width:227px;height:26px;background:#424242"></div>
<div class="a" style="left:883px;top:186px;width:39px;height:26px;background:#535353"></div>
<div class="a" style="left:842px;top:187px;width:1px;height:25px;background:#3a3a3a"></div>
<div class="a" style="left:803px;top:319px;width:227px;height:6px;background:#4a4a4a;border-top:1.5px solid #383838"></div>
<div class="a t" style="left:813px;top:193px;font-size:12px;color:#b8b8b8">色板</div>
<div class="a t" style="left:853px;top:193px;font-size:12px;color:#b8b8b8">画笔</div>
<div class="a t" style="left:892px;top:193px;font-size:12px;color:#f4f4f4">符号</div>
<svg class="a" style="left:0;top:0" width="1200" height="340"><path d="M1004.2 179.2l-1.7 1.7 1.7 1.7M1007.2 179.2l-1.7 1.7 1.7 1.7" stroke="#c0c0c0" stroke-width="0.9" fill="none"/><path d="M1018 178.3l5.6 5.4M1023.6 178.3l-5.6 5.4" stroke="#d0d0d0" stroke-width="1.1"/><path d="M1013.5 196.5h10.5M1013.5 198.5h10.5M1013.5 200.5h10.5M1013.5 202.5h10.5" stroke="#c8c8c8" stroke-width="1.1"/><rect x="809.5" y="218" width="185" height="79" fill="#4a4a4a"/><rect x="810.8" y="218.0" width="28.3" height="15.0" fill="#e6e6e6"/><rect x="841.1" y="218.0" width="28.8" height="15.0" fill="#e6e6e6"/><rect x="871.9" y="218.0" width="28.5" height="15.0" fill="#e6e6e6"/><rect x="902.4" y="218.0" width="29.4" height="15.0" fill="#e6e6e6"/><rect x="933.8" y="218.0" width="28.7" height="15.0" fill="#e6e6e6"/><rect x="964.5" y="218.0" width="28.4" height="15.0" fill="#e6e6e6"/><rect x="810.8" y="235.0" width="28.3" height="29.3" fill="#e6e6e6"/><rect x="841.1" y="235.0" width="28.8" height="29.3" fill="#e6e6e6"/><rect x="871.9" y="235.0" width="28.5" height="29.3" fill="#e6e6e6"/><rect x="902.4" y="235.0" width="29.4" height="29.3" fill="#e6e6e6"/><rect x="933.8" y="235.0" width="28.7" height="29.3" fill="#e6e6e6"/><rect x="964.5" y="235.0" width="28.4" height="29.3" fill="#e6e6e6"/><rect x="810.8" y="266.3" width="28.3" height="28.9" fill="#e6e6e6"/><rect x="841.1" y="266.3" width="28.8" height="28.9" fill="#e6e6e6"/><rect x="871.9" y="266.3" width="28.5" height="28.9" fill="#e6e6e6"/><rect x="902.4" y="266.3" width="29.4" height="28.9" fill="#e6e6e6"/><rect x="933.8" y="266.3" width="28.7" height="28.9" fill="#e6e6e6"/><rect x="964.5" y="266.3" width="28.4" height="28.9" fill="#e6e6e6"/><rect x="1011" y="218" width="12" height="79" fill="#474747"/><rect x="1013" y="258" width="9" height="30" rx="4.5" fill="#5e5e5e"/><path d="M1014.5 226l3-3 3 3M1014.5 290l3 3 3-3" stroke="#a0a0a0" stroke-width="1.1" fill="none"/><rect x="938.5" y="303.5" width="10" height="10" fill="none" stroke="#cfcfcf" stroke-width="1.2"/><path d="M940.5 306.5h6M940.5 308.5h6M940.5 310.5h6" stroke="#cfcfcf" stroke-width="1"/><path d="M964.5 304h9v10h-6l-3-3z" fill="#cfcfcf"/><path d="M964.5 311h3v3" fill="#6a6a6a"/><path d="M989 306h8M991.5 304.5h3M990 306v8h6v-8" stroke="#cfcfcf" stroke-width="1.2" fill="none"/><path d="M992 308v4M994 308v4" stroke="#cfcfcf" stroke-width="1"/><path d="M816 305c1-2 4-2 5 0" stroke="#cfcfcf" stroke-width="1.3" fill="none"/></svg>
<svg class="a" style="left:0;top:0" width="1200" height="340"><defs><clipPath id="symclip"><rect x="809" y="218" width="186" height="79"/></clipPath></defs><g clip-path="url(#symclip)"><defs><linearGradient id="rib" x1="0" y1="0" x2="1" y2="0"><stop offset="0" stop-color="#777"/><stop offset="0.3" stop-color="#e8e8e8"/><stop offset="0.55" stop-color="#fff"/><stop offset="0.75" stop-color="#aaa"/><stop offset="1" stop-color="#666"/></linearGradient><radialGradient id="ring" cx="0.4" cy="0.35" r="0.7"><stop offset="0" stop-color="#fafafa"/><stop offset="0.6" stop-color="#bbb"/><stop offset="1" stop-color="#555"/></radialGradient><radialGradient id="pib" cx="0.5" cy="0.5" r="0.6"><stop offset="0" stop-color="#2a60c0"/><stop offset="1" stop-color="#0a1a60"/></radialGradient></defs><path d="M813 218v13h18v-13" fill="none" stroke="#2aa0e0" stroke-width="2"/><rect x="818" y="222" width="7" height="9" fill="#2aa0e0"/><path d="M845 218c2 6 6 10 12 12" fill="none" stroke="#2aa0e0" stroke-width="2"/><path d="M855 221h4v-4h3v4h4v3h-4v4h-3v-4h-4z" fill="#e81010"/><path d="M874 218v6c0 2 1 3 3 3h18c2 0 3-1 3-3v-6" fill="none" stroke="#2aa0e0" stroke-width="1.8"/><rect x="879" y="222" width="16" height="8" fill="none" stroke="#2aa0e0" stroke-width="1.8"/><g fill="#f07868"><ellipse cx="916.5" cy="215" rx="1.8" ry="7" transform="rotate(0 916.5 222)"/><ellipse cx="916.5" cy="215" rx="1.8" ry="7" transform="rotate(24 916.5 222)"/><ellipse cx="916.5" cy="215" rx="1.8" ry="7" transform="rotate(48 916.5 222)"/><ellipse cx="916.5" cy="215" rx="1.8" ry="7" transform="rotate(72 916.5 222)"/><ellipse cx="916.5" cy="215" rx="1.8" ry="7" transform="rotate(96 916.5 222)"/><ellipse cx="916.5" cy="215" rx="1.8" ry="7" transform="rotate(120 916.5 222)"/><ellipse cx="916.5" cy="215" rx="1.8" ry="7" transform="rotate(144 916.5 222)"/><ellipse cx="916.5" cy="215" rx="1.8" ry="7" transform="rotate(168 916.5 222)"/><ellipse cx="916.5" cy="215" rx="1.8" ry="7" transform="rotate(192 916.5 222)"/><ellipse cx="916.5" cy="215" rx="1.8" ry="7" transform="rotate(216 916.5 222)"/><ellipse cx="916.5" cy="215" rx="1.8" ry="7" transform="rotate(240 916.5 222)"/><ellipse cx="916.5" cy="215" rx="1.8" ry="7" transform="rotate(264 916.5 222)"/><ellipse cx="916.5" cy="215" rx="1.8" ry="7" transform="rotate(288 916.5 222)"/><ellipse cx="916.5" cy="215" rx="1.8" ry="7" transform="rotate(312 916.5 222)"/><ellipse cx="916.5" cy="215" rx="1.8" ry="7" transform="rotate(336 916.5 222)"/></g><circle cx="916.5" cy="220" r="3.2" fill="#e8b030"/><path d="M938 218l6 9M959 218l-6 9" stroke="#666" stroke-width="4.5"/><path d="M938 218l6 9M959 218l-6 9" stroke="#e8e8e8" stroke-width="2.5"/><rect x="968" y="218" width="22" height="4" fill="url(#rib)" stroke="#555" stroke-width="0.5"/><path d="M811.5 246.0h5v7h-5l2.5-3.5z M838.5 246.0h-5v7h5l-2.5-3.5z" fill="#9a9a9a" stroke="#4a4a4a" stroke-width="0.7"/><rect x="815.0" y="245.5" width="20" height="7" fill="url(#rib)" stroke="#3a3a3a" stroke-width="0.7"/><path d="M842.0 246.0h5v7h-5l2.5-3.5z M869.0 246.0h-5v7h5l-2.5-3.5z" fill="#9a9a9a" stroke="#4a4a4a" stroke-width="0.7"/><rect x="845.5" y="245.5" width="20" height="7" fill="url(#rib)" stroke="#3a3a3a" stroke-width="0.7"/><circle cx="886" cy="249" r="13" fill="url(#ring)" stroke="#444" stroke-width="1"/><circle cx="886" cy="245.5" r="4.2" fill="#e6e6e6" stroke="#333" stroke-width="1"/><path d="M878 262c0-6 3-10 8-10s8 4 8 10z" fill="#e6e6e6" stroke="#333" stroke-width="1"/><path d="M905.0 246.5h5v6h-5l2.5-3.0z M929.0 246.5h-5v6h5l-2.5-3.0z" fill="#9a9a9a" stroke="#4a4a4a" stroke-width="0.7"/><rect x="908.5" y="246.0" width="17" height="6" fill="url(#rib)" stroke="#3a3a3a" stroke-width="0.7"/><path d="M936.0 246.5h5v6h-5l2.5-3.0z M960.0 246.5h-5v6h5l-2.5-3.0z" fill="#9a9a9a" stroke="#4a4a4a" stroke-width="0.7"/><rect x="939.5" y="246.0" width="17" height="6" fill="url(#rib)" stroke="#3a3a3a" stroke-width="0.7"/><path d="M965.2 246.0h5v7h-5l2.5-3.5z M992.2 246.0h-5v7h5l-2.5-3.5z" fill="#9a9a9a" stroke="#4a4a4a" stroke-width="0.7"/><rect x="968.7" y="245.5" width="20" height="7" fill="url(#rib)" stroke="#3a3a3a" stroke-width="0.7"/><path d="M811.5 277.5h5v7h-5l2.5-3.5z M838.5 277.5h-5v7h5l-2.5-3.5z" fill="#9a9a9a" stroke="#4a4a4a" stroke-width="0.7"/><rect x="815.0" y="277.0" width="20" height="7" fill="url(#rib)" stroke="#3a3a3a" stroke-width="0.7"/><path d="M842.0 277.5h5v7h-5l2.5-3.5z M869.0 277.5h-5v7h5l-2.5-3.5z" fill="#9a9a9a" stroke="#4a4a4a" stroke-width="0.7"/><rect x="845.5" y="277.0" width="20" height="7" fill="url(#rib)" stroke="#3a3a3a" stroke-width="0.7"/><rect x="874" y="274" width="23" height="14" rx="1.5" fill="#111"/><path d="M877 278h4M877 281h4M877 284h4M884 278h4M884 281.5h4M884 285h4M891 278h3M891 281h3M891 284h3" stroke="#ccc" stroke-width="1.2"/><path d="M906 277c1-2 3-2 3 0" stroke="#bbb" stroke-width="0.8" fill="none"/><path d="M918 278l5-5c2-1 4 1 3 3l-5 5z" fill="#c8e050"/><path d="M913 283l4-3 2 2-3 4-4 2z" fill="#503030"/><path d="M924 287l4-4 2 2-3 3-4 2z" fill="#e02040"/><path d="M941 290l15-18" fill="none" stroke="#e8f020" stroke-width="12" stroke-linecap="round"/><path d="M941 290l15-18" fill="none" stroke="#d8e8c8" stroke-width="7" stroke-linecap="round"/><path d="M937 288c3 4 6-2 8-4s5 1 7-3 3-5 7-8M944 293c-1-4 3-5 5-7s0-5 3-7 4-2 6-7" fill="none" stroke="#c01818" stroke-width="1.8"/><rect x="964.5" y="266.5" width="29" height="29" fill="#ececec" stroke="#111" stroke-width="1.5"/><g transform="translate(925.4,229.8) scale(0.105)"><path d="M396,453 C396,405 420,369 470,369 L624,369 L624,469 L613,469 L622.5,510 C625,530 624,560 608,578 C595,594 578,603 558,603 C535,603 512,596 498,583 C484,596 468,603 452,603 C428,603 405,582 404,552 C403,530 412,515 422,500 L434,462 Z" fill="#1a3a9a" stroke="#0a1050" stroke-width="14"/><path d="M396,453 C396,405 420,369 470,369 L624,369 L624,469 L613,469 L622.5,510 C625,530 624,560 608,578 C595,594 578,603 558,603 C535,603 512,596 498,583 C484,596 468,603 452,603 C428,603 405,582 404,552 C403,530 412,515 422,500 L434,462 Z" fill="#1a70c8" transform="translate(30,20) scale(0.94)" opacity="0.6"/><path d="M435,447 C433,428 442,409 468,409 L585,409 L585,429 L552,429 L544.5,485 L540,524 C540,536 546,541 552,540 C562,539 574,530 584,514 C585,540 572,564 550,564 C530,564 517,550 517,528 L521,485 L531,429 L502,429 L496,485 L487,520 L483,534 C481,553 470,565 454,565 C443,565 438,555 440,547 C443,536 458,529 466,520 L474,485 L480,430 C460,430 445,434 435,447 Z" fill="none" stroke="#0a1a5a" stroke-width="14"/><path d="M435,447 C433,428 442,409 468,409 L585,409 L585,429 L552,429 L544.5,485 L540,524 C540,536 546,541 552,540 C562,539 574,530 584,514 C585,540 572,564 550,564 C530,564 517,550 517,528 L521,485 L531,429 L502,429 L496,485 L487,520 L483,534 C481,553 470,565 454,565 C443,565 438,555 440,547 C443,536 458,529 466,520 L474,485 L480,430 C460,430 445,434 435,447 Z" fill="#f8e8b0"/></g></g></svg>
<div class="a" style="left:700px;top:308px;width:227px;height:180px;background:rgba(0,0,0,0.2);filter:blur(2px)"></div>
<div class="a" style="left:698px;top:306px;width:226px;height:179px;background:#535353;border-radius:3px 3px 0 0"></div>
<div class="a" style="left:698px;top:306px;width:226px;height:13px;background:#3e3e3e;border-radius:3px 3px 0 0"></div>
<div class="a" style="left:698px;top:319px;width:226px;height:26px;background:#474747"></div>
<div class="a t" style="left:707px;top:326px;font-size:12px;color:#f0f0f0">外观</div>
<div class="a" style="left:704px;top:348px;width:215px;height:110px;border:1px solid #4a4a4a"></div>
<div class="a" style="left:705px;top:374px;width:213px;height:1px;background:#4a4a4a"></div>
<div class="a" style="left:705px;top:443px;width:213px;height:1px;background:#4a4a4a"></div>
<div class="a" style="left:705px;top:397px;width:213px;height:24px;background:#4d6480"></div>
<div class="a" style="left:707px;top:354px;width:17px;height:17px;background:#fff"></div>
<div class="a" style="left:727px;top:397px;width:1px;height:46px;background:#3a3a3a"></div>
<div class="a t" style="left:752px;top:357px;font-size:12px;color:#e8e8e8">编组</div>
<div class="a t" style="left:752px;top:381px;font-size:12px;color:#e0e0e0">内容</div>
<div class="a t" style="left:752px;top:404px;font-size:12px;color:#f0f0f0">内发光</div>
<div class="a" style="left:752px;top:416px;width:33px;height:1px;border-top:1px dotted #d8d8d8"></div>
<div class="a t" style="left:752px;top:426px;font-size:12px;color:#e0e0e0">不透明度</div>
<div class="a" style="left:752px;top:439px;width:89px;height:1px;border-top:1px dotted #b0b0b0"></div>
<div class="a" style="left:698px;top:477px;width:226px;height:8px;background:#4a4a4a;border-top:1.5px solid #383838"></div>
<svg class="a" style="left:0;top:0" width="1200" height="500"><path d="M899.7 311.2l-1.7 1.7 1.7 1.7M902.7 311.2l-1.7 1.7 1.7 1.7" stroke="#c0c0c0" stroke-width="0.9" fill="none"/><path d="M913.3 310.2l5.6 5.4M918.9 310.2l-5.6 5.4" stroke="#d0d0d0" stroke-width="1.1"/><path d="M908.5 328.5h10.5M908.5 330.5h10.5M908.5 332.5h10.5M908.5 334.5h10.5" stroke="#c8c8c8" stroke-width="1.1"/><path d="M709 409.5c3-4 10-4 13 0c-3 4-10 4-13 0z" fill="#e0e8f0"/><circle cx="715.5" cy="409.5" r="2.3" fill="#4d6480"/><path d="M709 432.5c3-4 10-4 13 0c-3 4-10 4-13 0z" fill="#777"/><circle cx="715.5" cy="432.5" r="2.3" fill="#535353"/><text x="902" y="414" font-size="13" font-family="Liberation Serif" font-style="italic" fill="#c8d4e0">fx</text><rect x="710.5" y="463" width="9.5" height="9.5" fill="none" stroke="#cfcfcf" stroke-width="1.6"/><rect x="734.5" y="462.5" width="10" height="10" fill="none" stroke="#cfcfcf" stroke-width="1.2"/><rect x="736.5" y="464.5" width="6" height="6" fill="#cfcfcf"/><text x="758" y="472" font-size="13" font-family="Liberation Serif" font-style="italic" fill="#cfcfcf">fx</text><rect x="770" y="470" width="1.5" height="1.5" fill="#cfcfcf"/><circle cx="843.5" cy="468" r="4.5" fill="none" stroke="#cfcfcf" stroke-width="1.5"/><path d="M840.5 465l6 6" stroke="#cfcfcf" stroke-width="1.5"/><path d="M864 463h9.5v10h-6l-3.5-3.5z" fill="#cfcfcf"/><path d="M864 469.5h3.5v3.5" fill="#6a6a6a"/><path d="M886.5 464.5h11M890 462.5h4M888 464.5v9h8v-9" stroke="#cfcfcf" stroke-width="1.2" fill="none"/><path d="M890.5 466.5v5M892 466.5v5M893.5 466.5v5" stroke="#cfcfcf" stroke-width="0.8"/><path d="M802 481.5h18" stroke="#3a3a3a" stroke-width="3" stroke-dasharray="2 1"/></svg>
<div class="a" style="left:764px;top:421px;width:76px;height:16px;background:#fff;border:1px solid #777"></div>
<div class="a t" style="left:767px;top:424px;font-size:10px;color:#333;letter-spacing:-0.1px">单击以编辑效果</div>
<svg class="a" style="left:0;top:0" width="1200" height="500"><g filter="url(#ash)"><path d="M722 294L759 385" stroke="#ee1111" stroke-width="4.5"/><path d="M767.6 406L751.5 387.5L766.5 381z" fill="#ee1111"/></g><defs><filter id="ash" x="-50%" y="-20%" width="200%" height="140%"><feDropShadow dx="1.5" dy="1.5" stdDeviation="1.5" flood-color="#000" flood-opacity="0.6"/></filter></defs></svg>
</body></html>
